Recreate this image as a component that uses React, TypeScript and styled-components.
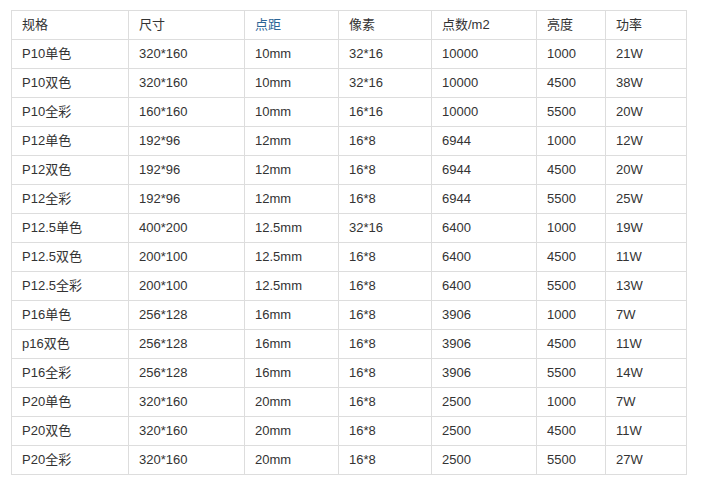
import React from "react";
import styled, { createGlobalStyle } from "styled-components";

const GlobalStyle = createGlobalStyle`
  body {
    margin: 0;
    background: #fff;
    font-family: "Liberation Sans", Arial, "Noto Sans CJK SC", sans-serif;
  }
`;

const Wrap = styled.div`
  padding: 10px 0 0 11px;
`;

const Table = styled.table`
  border-collapse: collapse;
  table-layout: fixed;
  width: 676px;
  font-size: 13px;
  color: #333;
`;

const Cell = styled.td<{ $blue?: boolean }>`
  border: 1px solid #dddddd;
  height: 28px;
  padding: 0 0 0 10px;
  line-height: 16px;
  text-align: left;
  vertical-align: middle;
  white-space: nowrap;
  color: ${({ $blue }) => ($blue ? "#2a6496" : "#333")};
`;

const widths = [117, 116, 94, 93, 105, 69, 81];
const head = ["规格", "尺寸", "点距", "像素", "点数/m2", "亮度", "功率"];

const rows: string[][] = [
  ["P10单色", "320*160", "10mm", "32*16", "10000", "1000", "21W"],
  ["P10双色", "320*160", "10mm", "32*16", "10000", "4500", "38W"],
  ["P10全彩", "160*160", "10mm", "16*16", "10000", "5500", "20W"],
  ["P12单色", "192*96", "12mm", "16*8", "6944", "1000", "12W"],
  ["P12双色", "192*96", "12mm", "16*8", "6944", "4500", "20W"],
  ["P12全彩", "192*96", "12mm", "16*8", "6944", "5500", "25W"],
  ["P12.5单色", "400*200", "12.5mm", "32*16", "6400", "1000", "19W"],
  ["P12.5双色", "200*100", "12.5mm", "16*8", "6400", "4500", "11W"],
  ["P12.5全彩", "200*100", "12.5mm", "16*8", "6400", "5500", "13W"],
  ["P16单色", "256*128", "16mm", "16*8", "3906", "1000", "7W"],
  ["p16双色", "256*128", "16mm", "16*8", "3906", "4500", "11W"],
  ["P16全彩", "256*128", "16mm", "16*8", "3906", "5500", "14W"],
  ["P20单色", "320*160", "20mm", "16*8", "2500", "1000", "7W"],
  ["P20双色", "320*160", "20mm", "16*8", "2500", "4500", "11W"],
  ["P20全彩", "320*160", "20mm", "16*8", "2500", "5500", "27W"],
];

export default function App() {
  return (
    <>
      <GlobalStyle />
      <Wrap>
        <Table>
          <colgroup>
            {widths.map((w, i) => (
              <col key={i} style={{ width: w }} />
            ))}
          </colgroup>
          <tbody>
            <tr>
              {head.map((h, i) => (
                <Cell key={i} $blue={i === 2}>
                  {h}
                </Cell>
              ))}
            </tr>
            {rows.map((r, ri) => (
              <tr key={ri}>
                {r.map((c, ci) => (
                  <Cell key={ci}>{c}</Cell>
                ))}
              </tr>
            ))}
          </tbody>
        </Table>
      </Wrap>
    </>
  );
}
